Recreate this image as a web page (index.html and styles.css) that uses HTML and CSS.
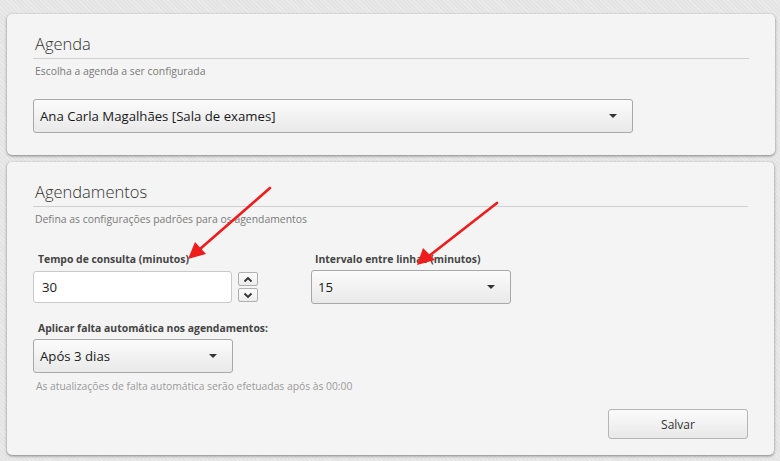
FILE: index.html
```html
<!DOCTYPE html>
<html lang="pt-BR">
<head>
<meta charset="utf-8">
<title>Configurações da agenda</title>
<link rel="stylesheet" href="styles.css">
</head>
<body>
<div class="page">
  <section class="card card-agenda">
    <h2 class="card-title">Agenda</h2>
    <p class="card-sub">Escolha a agenda a ser configurada</p>
    <div class="select select-wide">
      <span class="select-text">Ana Carla Magalhães [Sala de exames]</span>
      <span class="caret"></span>
    </div>
  </section>

  <section class="card card-sched">
    <h2 class="card-title">Agendamentos</h2>
    <p class="card-sub">Defina as configurações padrões para os agendamentos</p>

    <div class="fields-row">
      <div class="field field-tempo">
        <label class="field-label">Tempo de consulta (minutos)</label>
        <div class="spin-group">
          <div class="text-input">30</div>
          <div class="spinner">
            <span class="spin-btn">
              <svg width="10" height="7" viewBox="0 0 10 7"><path d="M1.5 5.5 L5 2 L8.5 5.5" fill="none" stroke="#333" stroke-width="1.8"/></svg>
            </span>
            <span class="spin-btn">
              <svg width="10" height="7" viewBox="0 0 10 7"><path d="M1.5 1.5 L5 5 L8.5 1.5" fill="none" stroke="#333" stroke-width="1.8"/></svg>
            </span>
          </div>
        </div>
      </div>
      <div class="field field-intervalo">
        <label class="field-label">Intervalo entre linhas (minutos)</label>
        <div class="select select-small">
          <span class="select-text">15</span>
          <span class="caret"></span>
        </div>
      </div>
    </div>

    <div class="field field-falta">
      <label class="field-label">Aplicar falta automática nos agendamentos:</label>
      <div class="select select-small">
        <span class="select-text">Após 3 dias</span>
        <span class="caret"></span>
      </div>
      <p class="help">As atualizações de falta automática serão efetuadas após às 00:00</p>
    </div>

    <div class="actions">
      <button class="btn">Salvar</button>
    </div>
  </section>
</div>

<svg class="annotations" width="780" height="461" viewBox="0 0 780 461">
  <line x1="270" y1="188" x2="200" y2="249" stroke="#ee1c1c" stroke-width="2.6" stroke-linecap="round"/>
  <polygon points="188,259 195,242 206,254" fill="#ee1c1c"/>
  <line x1="497" y1="203" x2="429" y2="256" stroke="#ee1c1c" stroke-width="2.6" stroke-linecap="round"/>
  <polygon points="417,265 423,248 435,260" fill="#ee1c1c"/>
</svg>
</body>
</html>
```

FILE: styles.css
```css
html, body {
  margin: 0;
  padding: 0;
}
body {
  width: 780px;
  height: 461px;
  overflow: hidden;
  position: relative;
  font-family: "Open Sans", "Noto Sans", "Liberation Sans", sans-serif;
  color: #333;
  background-color: #e4e4e4;
  background-image: repeating-linear-gradient(45deg, rgba(255,255,255,0.25) 0 1px, transparent 1px 3px);
}
.page {
  padding: 14px 5px 0 7px;
  display: flex;
  flex-direction: column;
  gap: 7px;
}
.card {
  background: #f4f4f4;
  border-radius: 5px;
  box-shadow: 0 1px 3px rgba(0,0,0,0.45);
  padding: 18px 26px 0 26px;
  box-sizing: border-box;
}
.card-agenda {
  height: 141px;
  width: 768px;
}
.card-sched {
  height: 293px;
  width: 767px;
  display: flex;
  flex-direction: column;
}
.card-title {
  margin: 0;
  font-size: 16.5px;
  font-weight: 300;
  line-height: 24px;
  padding: 0 0 2px 2px;
  border-bottom: 1px solid #cfcfcf;
  color: #333;
}
.card-sub {
  margin: 4px 0 0 2px;
  font-size: 10.4px;
  line-height: 16px;
  color: #7a7a7a;
}
.select {
  box-sizing: border-box;
  height: 34px;
  border: 1px solid #a8a8a8;
  border-radius: 3px;
  background: linear-gradient(#fbfbfb, #e9e9e9);
  display: flex;
  align-items: center;
  justify-content: space-between;
  padding: 0 15px 0 6px;
}
.select-wide {
  width: 600px;
  margin-top: 20px;
}
.select-small {
  width: 200px;
}
.select-text {
  font-size: 13.2px;
  color: #1a1a1a;
}
.caret {
  width: 0;
  height: 0;
  border-left: 4px solid transparent;
  border-right: 4px solid transparent;
  border-top: 4px solid #333;
}
.fields-row {
  display: flex;
  gap: 53px;
  margin-top: 24px;
}
.field {
  display: flex;
  flex-direction: column;
}
.field-label {
  font-size: 10.4px;
  font-weight: 700;
  line-height: 16px;
  color: #444;
  padding-left: 5px;
  margin-bottom: 3px;
}
.field-intervalo .field-label {
  padding-left: 4px;
}
.spin-group {
  display: flex;
  align-items: center;
  gap: 6px;
  height: 34px;
}
.text-input {
  box-sizing: border-box;
  width: 199px;
  height: 32px;
  background: #fff;
  border: 1px solid #c9c9c9;
  border-radius: 3px;
  font-size: 13.2px;
  color: #1a1a1a;
  display: flex;
  align-items: center;
  padding-left: 8px;
}
.spinner {
  display: flex;
  flex-direction: column;
  gap: 2px;
}
.spin-btn {
  box-sizing: border-box;
  width: 20px;
  height: 14px;
  border: 1px solid #b0b0b0;
  border-radius: 2px;
  background: linear-gradient(#fdfdfd, #ececec);
  display: flex;
  align-items: center;
  justify-content: center;
}
.field-falta {
  margin-top: 16px;
}
.help {
  margin: 5px 0 0 3px;
  font-size: 10.3px;
  line-height: 16px;
  color: #9a9a9a;
}
.actions {
  display: flex;
  justify-content: flex-end;
  margin-top: 15px;
}
.btn {
  width: 140px;
  height: 30px;
  border: 1px solid #b5b5b5;
  border-radius: 3px;
  background: linear-gradient(#fbfbfb, #e8e8e8);
  font-family: inherit;
  font-size: 12px;
  color: #333;
  padding: 0;
}
.annotations {
  position: absolute;
  left: 0;
  top: 0;
  pointer-events: none;
}
```
